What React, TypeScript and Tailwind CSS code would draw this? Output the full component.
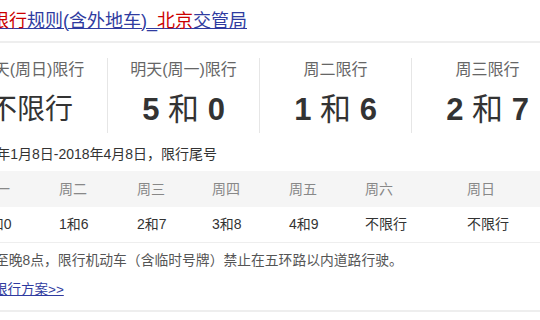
import React from "react";

const cols = [
  { label: "今天(周日)限行", big: "不限行", nums: false },
  { label: "明天(周一)限行", big: ["5", "0"], nums: true },
  { label: "周二限行", big: ["1", "6"], nums: true },
  { label: "周三限行", big: ["2", "7"], nums: true },
];

const days = ["周一", "周二", "周三", "周四", "周五", "周六", "周日"];
const vals = ["5和0", "1和6", "2和7", "3和8", "4和9", "不限行", "不限行"];

export default function App() {
  return (
    <div className="w-[540px] h-[320px] overflow-hidden bg-white font-['Liberation_Sans','Noto_Sans_CJK_SC',sans-serif]">
      <div className="h-[41px] flex items-center whitespace-nowrap">
        <a className="ml-[-9px] text-[18px] leading-[24px] underline text-[#2f3ba0] decoration-1">
          <span className="text-[#c00]">限行</span>规则(含外地车)_<span className="text-[#c00]">北京</span>交管局
        </a>
      </div>
      <div className="h-[2px] bg-[#eeeeee]" />
      <div className="ml-[-45px] w-[660px]">
        <div className="mt-[15px] flex">
          {cols.map((c, i) => (
            <div
              key={i}
              className={
                "w-[152px] h-[75px] shrink-0 flex flex-col items-center " +
                (i > 0 ? "border-l border-[#e6e6e6]" : "")
              }
            >
              <div className="text-[16px] leading-[24px] text-[#666] whitespace-nowrap">{c.label}</div>
              {c.nums ? (
                <div className="mt-[8px] text-[31px] leading-[40px] text-[#333] whitespace-nowrap">
                  <span className="font-bold">{(c.big as string[])[0]}</span> 和{" "}
                  <span className="font-bold">{(c.big as string[])[1]}</span>
                </div>
              ) : (
                <div className="mt-[8px] text-[28px] leading-[40px] text-[#333] whitespace-nowrap">
                  {c.big as string}
                </div>
              )}
            </div>
          ))}
        </div>
        <div className="mt-[11px] pl-[10px] text-[14px] leading-[20px] text-[#333] whitespace-nowrap">
          2018年1月8日-2018年4月8日，限行尾号
        </div>
        <div className="mt-[7px] h-[36px] bg-[#f5f5f5] pl-[27px] grid grid-cols-[77px_78px_75px_77px_76px_102px_1fr] items-center text-[14px] text-[#888]">
          {days.map((d) => (
            <div key={d} className="whitespace-nowrap">{d}</div>
          ))}
        </div>
        <div className="h-[36px] border-b border-[#eeeeee] pl-[27px] grid grid-cols-[77px_78px_75px_77px_76px_102px_1fr] items-center text-[14px] text-[#333]">
          {vals.map((v, i) => (
            <div key={i} className="whitespace-nowrap">{v}</div>
          ))}
        </div>
        <div className="mt-[8px] pl-[40px] text-[13.8px] leading-[20px] text-[#555] whitespace-nowrap">
          至晚8点，限行机动车（含临时号牌）禁止在五环路以内道路行驶。
        </div>
        <div className="mt-[9px] pl-[39px] text-[13.5px] leading-[20px] whitespace-nowrap">
          <a className="text-[#2f3ba0] underline">限行方案&gt;&gt;</a>
        </div>
      </div>
      <div className="mt-[10px] h-[2px] bg-[#eeeeee]" />
    </div>
  );
}
